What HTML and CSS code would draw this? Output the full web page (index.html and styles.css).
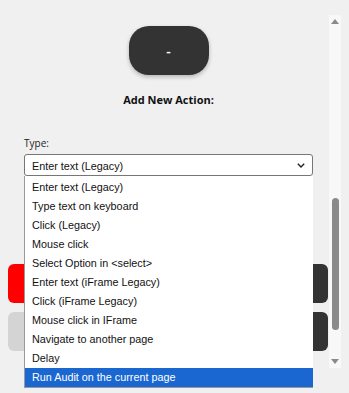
FILE: index.html
```html
<!DOCTYPE html>
<html lang="en">
<head>
    <meta charset="UTF-8">
    <meta name="viewport" content="width=device-width, initial-scale=1.0">
    <title>Add Action</title>
    <link rel="stylesheet" href="styles.css">
</head>
<body>
    <div class="popup">
        <div class="panel">
            <div class="top-bar">
                <button class="toggle-btn">-</button>
            </div>
            <h2 class="title">Add New Action:</h2>

            <div class="form">
                <label class="field-label">Type:</label>
                <div class="select-wrap">
                    <div class="select-box">
                        <span>Enter text (Legacy)</span>
                        <svg class="chevron" width="8" height="5" viewBox="0 0 8 5">
                            <path d="M0.8 0.8 L4 4 L7.2 0.8" fill="none" stroke="#222" stroke-width="1.4"/>
                        </svg>
                    </div>
                    <ul class="option-list">
                        <li>Enter text (Legacy)</li>
                        <li>Type text on keyboard</li>
                        <li>Click (Legacy)</li>
                        <li>Mouse click</li>
                        <li>Select Option in &lt;select&gt;</li>
                        <li>Enter text (iFrame Legacy)</li>
                        <li>Click (iFrame Legacy)</li>
                        <li>Mouse click in IFrame</li>
                        <li>Navigate to another page</li>
                        <li>Delay</li>
                        <li class="selected">Run Audit on the current page</li>
                    </ul>
                </div>
                <input class="text-input" type="text">
                <input class="text-input" type="text">
            </div>

            <!-- button labels sit under the open dropdown -->
            <div class="actions">
                <button class="btn btn-red" aria-label="Cancel"></button>
                <button class="btn btn-dark" aria-label="Add"></button>
                <button class="btn btn-gray" aria-label="Reset"></button>
                <button class="btn btn-dark" aria-label="Save"></button>
            </div>
        </div>

        <div class="scrollbar">
            <div class="arrow arrow-up"></div>
            <div class="track">
                <div class="thumb"></div>
            </div>
            <div class="arrow arrow-down"></div>
        </div>
    </div>
</body>
</html>
```

FILE: styles.css
```css
body {
    margin: 0;
    background-color: #f0f0f0;
    font-family: 'Open Sans', 'Noto Sans', sans-serif;
    color: #111111;
    overflow: hidden;
}

.popup {
    display: flex;
    padding-left: 8px;
    height: 393px;
}

.panel {
    width: 321px;
    flex-shrink: 0;
}

.top-bar {
    display: flex;
    justify-content: center;
    padding-top: 26px;
}

.toggle-btn {
    width: 80px;
    height: 49px;
    border: none;
    border-radius: 20px;
    background-color: #333333;
    color: #FFFFFF;
    font-family: 'Open Sans', sans-serif;
    font-size: 14px;
    font-weight: 600;
    box-shadow: 0px 2px 4px rgba(0, 0, 0, 0.25);
}

.title {
    margin: 16px 0 0 0;
    text-align: center;
    font-size: 11px;
    font-weight: 700;
    line-height: 18px;
}

.form {
    padding: 27px 16px 0 16px;
}

.field-label {
    display: block;
    font-size: 10px;
    color: #222222;
    line-height: 14px;
    margin-bottom: 4px;
}

.select-wrap {
    position: relative;
}

.select-box {
    height: 22px;
    box-sizing: border-box;
    border: 1px solid #767676;
    border-radius: 3px;
    background-color: #FFFFFF;
    display: flex;
    align-items: center;
    justify-content: space-between;
    padding: 1px 7px 0 7px;
    font-family: 'Liberation Sans', Arial, sans-serif;
    font-size: 10.8px;
    color: #111111;
}

.chevron {
    display: block;
}

.option-list {
    position: absolute;
    top: 22px;
    left: 0;
    width: 288px;
    margin: 0;
    padding: 0;
    list-style: none;
    background-color: #FFFFFF;
    border-left: 1px solid #9a9a9a;
    border-bottom: 1px solid #9a9a9a;
    z-index: 2;
    font-family: 'Liberation Sans', Arial, sans-serif;
    font-size: 10.8px;
    color: #111111;
}

.option-list li {
    height: 19px;
    line-height: 19px;
    padding-left: 7px;
}

.option-list li:first-child {
    margin-top: 2px;
}

.option-list li.selected {
    background-color: #1a67d2;
    color: #FFFFFF;
}

.text-input {
    display: block;
    width: 289px;
    height: 22px;
    box-sizing: border-box;
    margin-top: 9px;
    border: 1px solid #9a9a9a;
    border-radius: 3px;
    background-color: #FFFFFF;
}

.actions {
    display: grid;
    grid-template-columns: 1fr 1fr;
    gap: 9px 8px;
    margin-top: 26px;
    width: 320px;
}

.btn {
    height: 39px;
    border: none;
    border-radius: 6px;
}

.btn-red {
    background-color: #FF0000;
}

.btn-dark {
    background-color: #333333;
}

.btn-gray {
    background-color: #d4d4d4;
}

.scrollbar {
    width: 12px;
    margin-top: 15px;
    height: 353px;
    background-color: #f8f8f8;
    display: flex;
    flex-direction: column;
    align-items: center;
}

.arrow {
    width: 0;
    height: 0;
    border-left: 4px solid transparent;
    border-right: 4px solid transparent;
    margin: 4px 0;
}

.arrow-up {
    border-bottom: 5px solid #8a8a8a;
}

.arrow-down {
    border-top: 5px solid #8a8a8a;
}

.track {
    flex: 1;
    width: 100%;
    display: flex;
    justify-content: center;
}

.thumb {
    width: 7px;
    height: 132px;
    margin-top: 170px;
    border-radius: 4px;
    background-color: #8a8a8a;
}
```
